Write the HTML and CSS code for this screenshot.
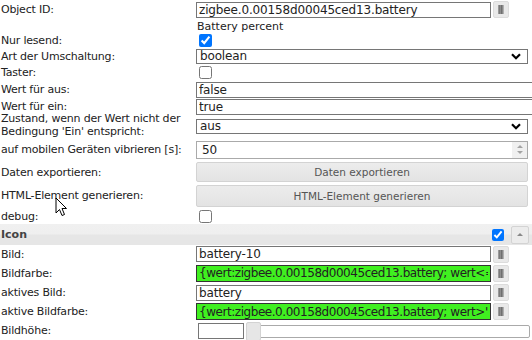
FILE: index.html
```html
<!DOCTYPE html>
<html lang="de">
<head>
  <meta charset="UTF-8">
  <title>Widget Attribute</title>
  <link rel="stylesheet" href="styles.css">
</head>
<body>

  <div class="attrs">
    <div class="row h19">
      <div class="lbl">Object ID:</div>
      <div class="val">
        <input class="txt short" type="text" value="zigbee.0.00158d00045ced13.battery">
        <button class="pick"><span class="note"></span></button>
      </div>
    </div>
    <div class="row h14">
      <div class="lbl"></div>
      <div class="val hint">Battery percent</div>
    </div>
    <div class="row h15">
      <div class="lbl">Nur lesend:</div>
      <div class="val"><input type="checkbox" checked></div>
    </div>
    <div class="row h16">
      <div class="lbl">Art der Umschaltung:</div>
      <div class="val">
        <div class="sel">
          <select><option>boolean</option></select>
          <svg class="chev" width="10" height="7" viewBox="0 0 10 7"><path d="M1 1.2 L5 5.2 L9 1.2" fill="none" stroke="#000" stroke-width="2.2"/></svg>
        </div>
      </div>
    </div>
    <div class="row h17">
      <div class="lbl">Taster:</div>
      <div class="val"><input type="checkbox"></div>
    </div>
    <div class="row h17">
      <div class="lbl">Wert für aus:</div>
      <div class="val"><input class="txt wide" type="text" value="false"></div>
    </div>
    <div class="row h17">
      <div class="lbl">Wert für ein:</div>
      <div class="val"><input class="txt wide" type="text" value="true"></div>
    </div>
    <div class="row h23">
      <div class="lbl wrap">Zustand, wenn der Wert nicht der Bedingung 'Ein' entspricht:</div>
      <div class="val">
        <div class="sel">
          <select><option>aus</option></select>
          <svg class="chev" width="10" height="7" viewBox="0 0 10 7"><path d="M1 1.2 L5 5.2 L9 1.2" fill="none" stroke="#000" stroke-width="2.2"/></svg>
        </div>
      </div>
    </div>
    <div class="row h23">
      <div class="lbl">auf mobilen Geräten vibrieren [s]:</div>
      <div class="val">
        <div class="num">
          <input class="txt" type="text" value="50">
          <span class="spin"><i class="up"></i><i class="down"></i></span>
        </div>
      </div>
    </div>
    <div class="row h22">
      <div class="lbl">Daten exportieren:</div>
      <div class="val"><button class="btn">Daten exportieren</button></div>
    </div>
    <div class="row h25">
      <div class="lbl">HTML-Element generieren:</div>
      <div class="val"><button class="btn">HTML-Element generieren</button></div>
    </div>
    <div class="row h16">
      <div class="lbl">debug:</div>
      <div class="val"><input type="checkbox"></div>
    </div>

    <div class="group">
      <div class="group-title">Icon</div>
      <input type="checkbox" checked>
      <button class="fold"><i></i></button>
    </div>

    <div class="row h18">
      <div class="lbl">Bild:</div>
      <div class="val">
        <input class="txt short" type="text" value="battery-10">
        <button class="pick"><span class="note"></span></button>
      </div>
    </div>
    <div class="row h20">
      <div class="lbl">Bildfarbe:</div>
      <div class="val">
        <input class="txt short green" type="text" value="{wert:zigbee.0.00158d00045ced13.battery; wert<=&quot;15&quot; ? &quot;red&quot; : &quot;lime&quot;}">
        <button class="pick"><span class="note"></span></button>
      </div>
    </div>
    <div class="row h19">
      <div class="lbl">aktives Bild:</div>
      <div class="val">
        <input class="txt short" type="text" value="battery">
        <button class="pick"><span class="note"></span></button>
      </div>
    </div>
    <div class="row h19">
      <div class="lbl">aktive Bildfarbe:</div>
      <div class="val">
        <input class="txt short green" type="text" value="{wert:zigbee.0.00158d00045ced13.battery; wert>&quot;15&quot; ? &quot;lime&quot; : &quot;red&quot;}">
        <button class="pick"><span class="note"></span></button>
      </div>
    </div>
    <div class="row h19">
      <div class="lbl">Bildhöhe:</div>
      <div class="val slider-val">
        <input class="txt tiny" type="text" value="">
        <div class="slider"><span class="handle"></span></div>
      </div>
    </div>
  </div>

  <svg class="cursor" width="13" height="20" viewBox="0 0 13 20">
    <path d="M1 1 L1 16 L4.5 12.5 L7 18.5 L9.5 17.5 L7 11.5 L11.5 11.5 Z" fill="#fff" stroke="#000" stroke-width="1" stroke-linejoin="miter"/>
  </svg>

</body>
</html>
```

FILE: styles.css
```css
body {
  margin: 0;
  padding: 0;
  background-color: #fff;
  font-family: "DejaVu Sans", sans-serif;
  font-size: 11px;
  color: #222;
  position: relative;
  width: 532px;
  height: 340px;
  overflow: hidden;
}

.attrs {
  width: 532px;
}

.row {
  display: grid;
  grid-template-columns: 196px 1fr;
  align-items: center;
}

.h14 { height: 14px; }
.h15 { height: 15px; }
.h16 { height: 16px; }
.h17 { height: 17px; }
.h18 { height: 18px; }
.h19 { height: 19px; }
.h20 { height: 20px; }
.h22 { height: 22px; }
.h23 { height: 23px; }
.h25 { height: 25px; }

.lbl {
  padding-left: 1px;
  line-height: 13px;
  letter-spacing: -0.2px;
  white-space: nowrap;
}

.lbl.wrap {
  white-space: normal;
  width: 190px;
  margin-top: -4px;
}

.val {
  display: flex;
  align-items: center;
  gap: 2px;
  min-width: 0;
}

.hint {
  padding-left: 1px;
  font-size: 11px;
  color: #222;
}

/* text inputs */
.txt {
  box-sizing: border-box;
  height: 16px;
  border: 1px solid #767676;
  padding: 0 2px;
  font-family: "DejaVu Sans", sans-serif;
  font-size: 12px;
  letter-spacing: -0.15px;
  color: #222;
  background: #fff;
  outline: none;
  margin: 0;
}

.txt.short { width: 295px; }
.txt.wide { width: 340px; flex: none; }
.txt.tiny { width: 46px; height: 16px; margin-left: 2px; }

.txt.green {
  background-color: #40f020;
  border-color: #333;
  height: 17px;
  letter-spacing: -0.45px;
}

input[type="checkbox"] {
  width: 13px;
  height: 13px;
  margin: 0 0 0 3px;
}

/* selects */
.sel {
  position: relative;
  width: 332px;
}

.sel select {
  -webkit-appearance: none;
  appearance: none;
  box-sizing: border-box;
  width: 100%;
  height: 15px;
  border: 1px solid #767676;
  border-radius: 0;
  padding: 0 0 0 3px;
  font-family: "DejaVu Sans", sans-serif;
  font-size: 12px;
  letter-spacing: -0.15px;
  line-height: 13px;
  color: #222;
  background: #fff;
  margin: 0;
}

.chev {
  position: absolute;
  right: 7px;
  top: 4px;
  pointer-events: none;
}

/* number field */
.num {
  position: relative;
  width: 332px;
}

.num .txt {
  width: 100%;
  height: 18px;
  padding-left: 5px;
  border-color: #aaa;
}

.spin {
  position: absolute;
  right: 1px;
  top: 1px;
  width: 15px;
  height: 16px;
  background: #f0f0f0;
  display: flex;
  flex-direction: column;
  align-items: center;
  justify-content: center;
  gap: 3px;
}

.spin i {
  width: 0;
  height: 0;
  border-left: 3px solid transparent;
  border-right: 3px solid transparent;
}

.spin .up { border-bottom: 3px solid #a3a3a3; }
.spin .down { border-top: 3px solid #a3a3a3; }

/* jquery-ui like buttons */
.btn {
  box-sizing: border-box;
  width: 332px;
  height: 20px;
  margin: 0;
  border: 1px solid #d3d3d3;
  border-radius: 2px;
  background: linear-gradient(#ececec, #e3e3e3);
  color: #555;
  font-family: "DejaVu Sans", sans-serif;
  font-size: 10.5px;
  padding: 0;
}

.row.h25 .btn { height: 22px; }

.pick {
  box-sizing: border-box;
  width: 16px;
  height: 17px;
  margin: 0;
  padding: 0;
  border: 1px solid #dcdcdc;
  border-radius: 2px;
  background: #e9e9e9;
  display: flex;
  align-items: center;
  justify-content: center;
}

.note {
  display: block;
  width: 6px;
  height: 9px;
  background: linear-gradient(90deg, #9a9a9a 0 1px, #7a7a7a 1px 2px, #8d8d8d 2px 3px, #6f6f6f 3px 4px, #8a8a8a 4px 5px, #b0b0b0 5px);
}

/* group header */
.group {
  display: flex;
  align-items: center;
  height: 21px;
  background: linear-gradient(#f0f0f0 0, #efefef 45%, #e6e6e6 55%, #e6e6e6 100%);
}

.group-title {
  flex: 1;
  padding-left: 1px;
  font-weight: bold;
  color: #444;
}

.group input[type="checkbox"] {
  margin: 0 7px 0 0;
  width: 12px;
  height: 12px;
}

.fold {
  box-sizing: border-box;
  width: 18px;
  height: 18px;
  margin: 0 3px 0 0;
  padding: 0;
  border: 1px solid #d3d3d3;
  border-radius: 2px;
  background: #ececec;
  display: flex;
  align-items: center;
  justify-content: center;
}

.fold i {
  width: 0;
  height: 0;
  border-left: 3px solid transparent;
  border-right: 3px solid transparent;
  border-bottom: 3px solid #888;
}

/* slider */
.slider-val {
  gap: 2px;
}

.slider {
  position: relative;
  flex: none;
  width: 282px;
  height: 11px;
  margin-top: 1px;
  border: 1px solid #aaa;
  border-radius: 2px;
  background: #fff;
}

.handle {
  position: absolute;
  left: -1px;
  top: -4px;
  width: 13px;
  height: 17px;
  border: 1px solid #d3d3d3;
  border-radius: 2px;
  background: #e6e6e6;
}

.cursor {
  position: absolute;
  left: 55px;
  top: 197px;
}
```
